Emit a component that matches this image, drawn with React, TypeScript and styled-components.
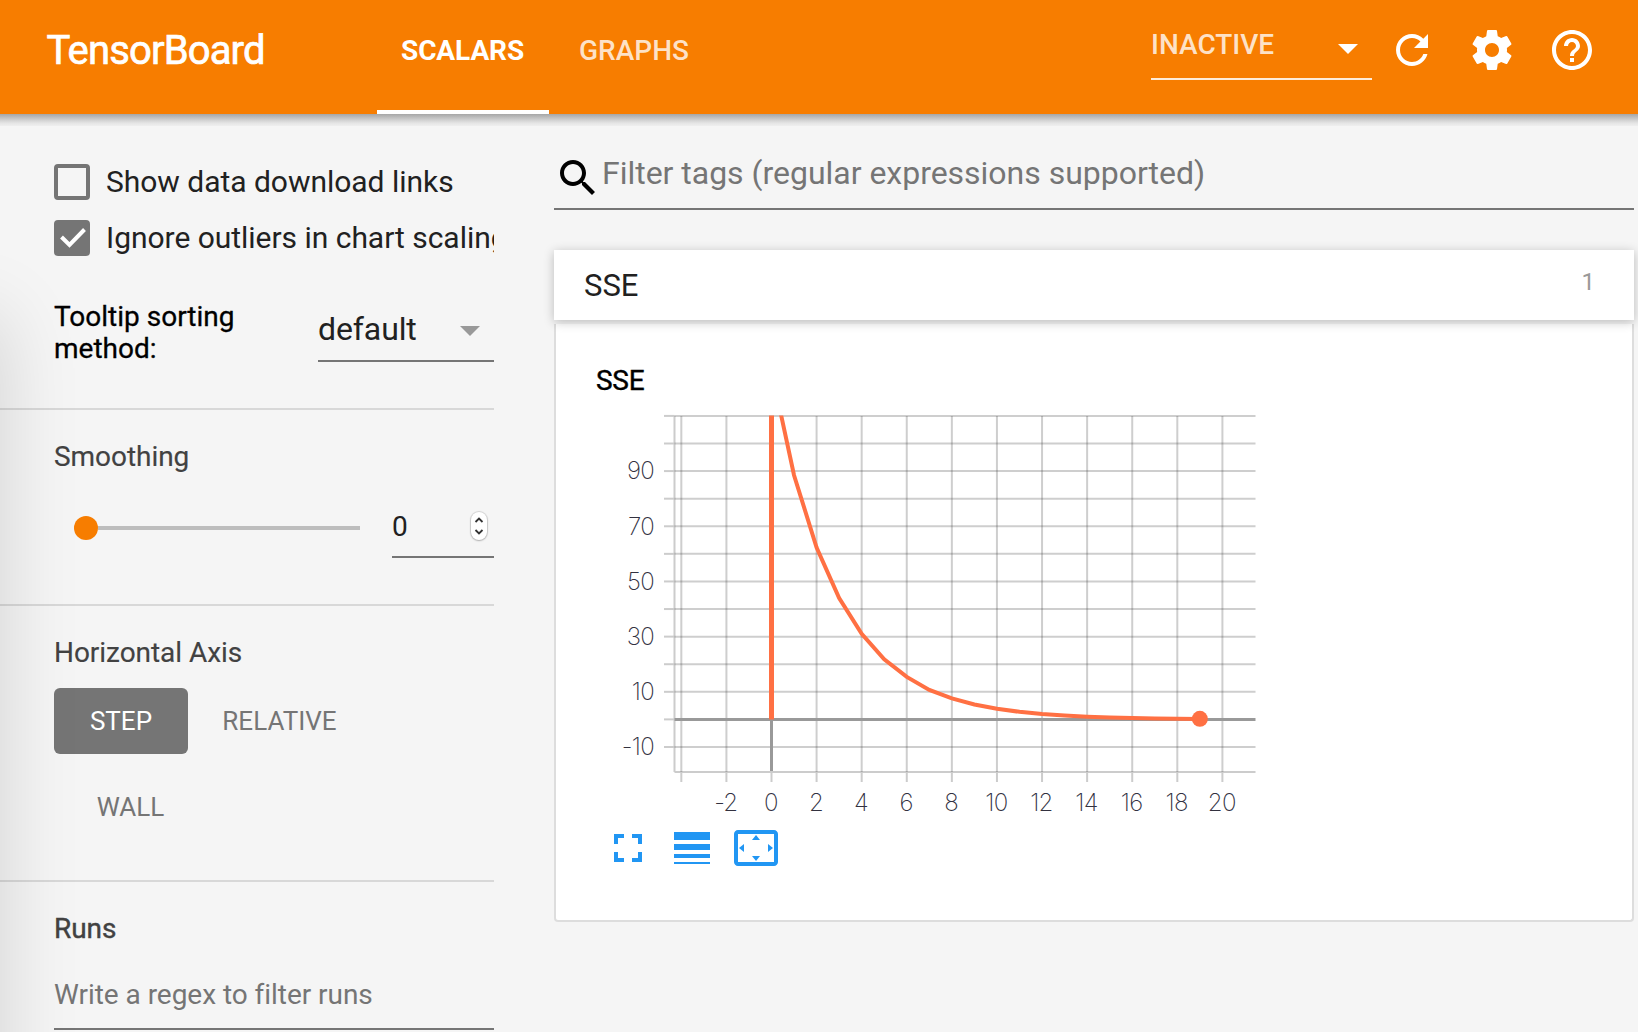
import React from 'react';
import styled, { createGlobalStyle } from 'styled-components';

const GlobalStyle = createGlobalStyle`
  * { box-sizing: border-box; }
  html, body { margin: 0; padding: 0; height: 1032px; overflow: hidden; background: #f5f5f5; }
  body { font-family: Roboto, "Liberation Sans", sans-serif; -webkit-font-smoothing: antialiased; }
`;

const Page = styled.div`
  position: relative;
  width: 1638px;
  height: 1032px;
  overflow: hidden;
  display: flex;
  flex-direction: column;
  background: #f5f5f5;
`;

/* ---------- header ---------- */

const Header = styled.header`
  height: 114px;
  flex: none;
  display: flex;
  align-items: flex-start;
  padding: 0 42px 0 46.5px;
  background: #f77d00;
  color: #fff;
`;

const HeaderShadow = styled.div`
  height: 12px;
  margin-bottom: -12px;
  flex: none;
  background: linear-gradient(#a6a6a6, #c8c8c8 40%, #e4e4e4 75%, #efefef);
`;

const Title = styled.h1`
  margin: 0;
  width: 330.5px;
  font-size: 40px;
  font-weight: 400;
  letter-spacing: -0.85px;
  line-height: 102px;
  -webkit-text-stroke: 0.7px currentColor;
`;

const Tab = styled.div<{ $active?: boolean }>`
  height: 114px;
  padding: 0 24px;
  border-bottom: 4px solid ${(p) => (p.$active ? '#fff' : 'transparent')};
  color: ${(p) => (p.$active ? '#fff' : 'rgba(255,255,255,.78)')};
  font-size: 28px;
  font-weight: ${(p) => (p.$active ? 700 : 500)};
  letter-spacing: ${(p) => (p.$active ? -0.1 : 0)}px;
  line-height: 101px;
  width: ${(p) => (p.$active ? 171.5 : 160)}px;
  white-space: nowrap;
  & + & { padding-left: 30.5px; }
`;

const HeaderTools = styled.div`
  margin-left: auto;
  display: flex;
`;

const StatusSelect = styled.div`
  width: 221px;
  height: 80px;
  padding: 28px 14px 0 0;
  margin-right: 16px;
  display: flex;
  justify-content: space-between;
  border-bottom: 2px solid rgba(255, 255, 255, 0.85);
  color: rgba(255, 255, 255, 0.78);
  font-size: 28px;
  font-weight: 500;
  line-height: 33px;
`;

const Caret = styled.i<{ $color: string; $top: number }>`
  width: 0;
  height: 0;
  margin-top: ${(p) => p.$top}px;
  border: 10px solid transparent;
  border-top-color: ${(p) => p.$color};
  border-bottom: 0;
`;

const HeaderIcon = styled.svg`
  width: 48px;
  height: 48px;
  margin: 26px 0 0 32px;
  fill: currentColor;
  &:first-of-type { margin-left: 0; }
`;

/* ---------- sidebar ---------- */

const Body = styled.div`
  flex: 1;
  min-height: 0;
  display: flex;
`;

const Sidebar = styled.aside`
  width: 494px;
  overflow: hidden;
  flex: none;
`;

const Section = styled.section<{ $height: number; $top: number }>`
  height: ${(p) => p.$height}px;
  padding: ${(p) => p.$top}px 0 0 54px;
  border-bottom: 2px solid #d8d8d8;
  &:last-child { border-bottom: 0; }
`;

const CheckRow = styled.label`
  display: flex;
  align-items: center;
  height: 36px;
  margin-bottom: 20px;
  gap: 16px;
  color: #212121;
  font-size: 30px;
  line-height: 36px;
  letter-spacing: -0.03px;
  white-space: nowrap;
`;

const Box = styled.span<{ $checked?: boolean }>`
  width: 36px;
  height: 36px;
  flex: none;
  border: 4px solid #757575;
  border-radius: 4px;
  background: ${(p) => (p.$checked ? '#757575' : 'transparent')};
  svg { display: block; width: 28px; height: 28px; }
`;

const TooltipRow = styled.div`
  display: flex;
  justify-content: space-between;
  margin-top: 44px;
  color: #000;
  font-size: 28px;
  line-height: 32px;
`;

const TooltipLabel = styled.div`
  width: 200px;
  padding-top: 1px;
  font-weight: 400;
  -webkit-text-stroke: 0.3px currentColor;
`;

const Dropdown = styled.div`
  width: 176px;
  height: 62px;
  padding: 11px 14px 0 0;
  display: flex;
  justify-content: space-between;
  border-bottom: 2px solid #757575;
  color: #212121;
  font-size: 32px;
  line-height: 36px;
  letter-spacing: -0.1px;
`;

const Heading = styled.h3<{ $dark?: boolean }>`
  margin: 0;
  font-size: 28px;
  font-weight: 400;
  line-height: 32px;
  letter-spacing: -0.05px;
  color: #424242;
  -webkit-text-stroke: ${(p) => (p.$dark ? 0.4 : 0.15)}px currentColor;
`;

const SliderRow = styled.div`
  display: flex;
  align-items: flex-start;
  margin-top: 27px;
  padding-left: 20px;
`;

const Slider = styled.div`
  width: 286px;
  height: 56px;
  display: flex;
  align-items: center;
  margin-right: 32px;
`;

const Knob = styled.span`
  width: 24px;
  height: 24px;
  border-radius: 50%;
  background: #f77d00;
`;

const Track = styled.span`
  flex: 1;
  height: 4px;
  background: #bdbdbd;
`;

const NumberField = styled.div`
  width: 102px;
  height: 58px;
  padding: 10px 7px 0 0;
  display: flex;
  justify-content: space-between;
  border-bottom: 2px solid #757575;
  color: #212121;
  font-size: 28px;
  line-height: 33px;
`;

const Stepper = styled.span`
  width: 16px;
  height: 28px;
  margin-top: 2px;
  border-radius: 8px;
  background: #fff;
  box-shadow: 0 0 1px 1px rgba(0, 0, 0, 0.14), 0 1px 2px rgba(0, 0, 0, 0.18);
  svg { display: block; }
`;

const AxisButtons = styled.div`
  display: flex;
  flex-wrap: wrap;
  row-gap: 20px;
  margin-top: 19px;
`;

const AxisButton = styled.button<{ $selected?: boolean; $width: number }>`
  width: ${(p) => p.$width}px;
  height: 66px;
  padding: 0;
  border: 0;
  border-radius: 6px;
  background: ${(p) => (p.$selected ? '#757575' : 'transparent')};
  color: ${(p) => (p.$selected ? '#fff' : '#757575')};
  font: 400 26px/66px Roboto, "Liberation Sans", sans-serif;
`;

const RunsFilter = styled.div`
  height: 62px;
  margin-top: 23px;
  padding-top: 11px;
  border-bottom: 2px solid #757575;
  color: #757575;
  font-size: 28px;
  line-height: 32px;
  letter-spacing: -0.04px;
`;

const WindowShade = styled.div`
  position: absolute;
  left: -100px;
  top: 315px;
  width: 100px;
  height: 1000px;
  box-shadow: 6px 0 76px rgba(0, 0, 0, 0.13);
  pointer-events: none;
`;

/* ---------- main ---------- */

const Main = styled.main`
  width: 1080px;
  margin-left: 60px;
`;

const TagFilter = styled.div`
  height: 96px;
  padding-top: 40px;
  display: flex;
  border-bottom: 2px solid #757575;
  color: #757575;
  font-size: 32px;
  line-height: 38px;
  letter-spacing: -0.02px;
  svg { width: 48px; height: 48px; fill: #000; }
`;

const CategoryHeader = styled.div`
  position: relative;
  display: flex;
  justify-content: space-between;
  height: 70px;
  margin: 40px 0 4px;
  padding: 0 39px 0 30px;
  background: #fff;
  box-shadow: 0 2px 10px rgba(0, 0, 0, 0.24);
  color: #212121;
  font-size: 31px;
  line-height: 72px;
`;

const Count = styled.span`
  color: #999;
  font-size: 24px;
  line-height: 65px;
`;

const Pane = styled.div`
  height: 598px;
  padding: 40px;
  border: 2px solid #ddd;
  border-top: 0;
  border-radius: 0 0 4px 4px;
  background: #fff;
`;

const ChartTitle = styled.h2`
  margin: 0;
  color: #000;
  font-size: 28px;
  font-weight: 400;
  line-height: 33px;
  letter-spacing: -0.3px;
  -webkit-text-stroke: 0.4px currentColor;
`;

const Plot = styled.svg`
  display: block;
  width: 660px;
  height: 422px;
  text {
    font-family: Inter, "Liberation Sans", sans-serif;
    font-weight: 200;
    font-size: 24px;
    letter-spacing: -0.7px;
    fill: #32313f;
  }
`;

const ChartActions = styled.div`
  display: flex;
  gap: 16px;
  margin: 5px 0 0 8px;
  svg { width: 48px; height: 48px; fill: #2196f3; }
`;

/* Plot coordinates start at (596, 397) of the page. */
const X0 = 771.5 - 596;
const Y0 = 719.4 - 397;
const px = (step: number) => X0 + step * 22.545;
const py = (value: number) => Y0 - value * 2.759;

const losses = [126.5, 88.5, 62.3, 44, 31, 21.8, 15.4, 10.7, 7.6, 5.4, 3.85, 2.75, 1.96, 1.4, 0.98, 0.7, 0.5, 0.34, 0.24, 0.18];
const xTicks = [-4, -2, 0, 2, 4, 6, 8, 10, 12, 14, 16, 18, 20];
const yTicks = [110, 100, 90, 80, 70, 60, 50, 40, 30, 20, 10, 0, -10];

function Chart() {
  const left = 78.5;
  const right = 659.5;
  const top = py(110);
  const bottom = 375;
  return (
    <Plot viewBox="0 0 660 422">
      <clipPath id="plotArea">
        <rect x={left} y={top - 0.5} width={right - left} height={bottom - top} />
      </clipPath>
      <g stroke="#ccc" strokeWidth="2">
        <line x1={left} x2={left} y1={top} y2={bottom} />
        <line x1={left} x2={right} y1={bottom} y2={bottom} />
        {xTicks.map((t) => <line key={t} x1={px(t)} x2={px(t)} y1={bottom} y2={385} />)}
        {yTicks.map((t) => <line key={t} x1={68} x2={left} y1={py(t)} y2={py(t)} />)}
      </g>
      <g stroke="#424242" strokeOpacity="0.26" strokeWidth="2">
        {xTicks.filter((t) => t !== 0).map((t) => <line key={t} x1={px(t)} x2={px(t)} y1={top} y2={bottom} />)}
        {yTicks.filter((t) => t !== 0).map((t) => <line key={t} x1={left} x2={right} y1={py(t)} y2={py(t)} />)}
      </g>
      <g stroke="#999" strokeWidth="3">
        <line x1={left} x2={right} y1={Y0} y2={Y0} />
        <line x1={X0} x2={X0} y1={Y0} y2={bottom - 1} />
      </g>
      <g clipPath="url(#plotArea)">
        <line x1={X0} x2={X0} y1={0} y2={Y0} stroke="#ff7043" strokeWidth="5" />
        <polyline
          points={losses.map((v, i) => `${px(i)},${py(v)}`).join(' ')}
          fill="none"
          stroke="#ff7043"
          strokeWidth="4"
        />
      </g>
      <circle cx={px(19)} cy={py(0.2)} r="8" fill="#ff7043" />
      {[90, 70, 50, 30, 10, -10].map((t) => (
        <text key={t} x={58} y={py(t) + 8.3} textAnchor="end">{t}</text>
      ))}
      {xTicks.slice(1).map((t) => (
        <text key={t} x={px(t) - 0.6} y={414} textAnchor="middle">{t}</text>
      ))}
    </Plot>
  );
}

export default function App() {
  return (
    <Page>
      <GlobalStyle />
      <Header>
        <Title>TensorBoard</Title>
        <Tab $active>SCALARS</Tab>
        <Tab>GRAPHS</Tab>
        <HeaderTools>
          <StatusSelect>
            INACTIVE
            <Caret $color="#fff" $top={16} />
          </StatusSelect>
          <HeaderIcon viewBox="0 0 24 24">
            <path d="M17.65 6.35C16.2 4.9 14.21 4 12 4c-4.42 0-7.99 3.58-7.99 8s3.57 8 7.99 8c3.73 0 6.84-2.55 7.73-6h-2.08c-.82 2.33-3.04 4-5.65 4-3.31 0-6-2.69-6-6s2.69-6 6-6c1.66 0 3.14.69 4.22 1.78L13 11h7V4l-2.35 2.35z" />
          </HeaderIcon>
          <HeaderIcon viewBox="0 0 24 24">
            <path d="M19.43 12.98c.04-.32.07-.64.07-.98s-.03-.66-.07-.98l2.11-1.65c.19-.15.24-.42.12-.64l-2-3.46c-.12-.22-.39-.3-.61-.22l-2.49 1c-.52-.4-1.08-.73-1.69-.98l-.38-2.65C14.46 2.18 14.25 2 14 2h-4c-.25 0-.46.18-.49.42l-.38 2.65c-.61.25-1.17.59-1.69.98l-2.49-1c-.23-.09-.49 0-.61.22l-2 3.46c-.13.22-.07.49.12.64l2.11 1.65c-.04.32-.07.65-.07.98s.03.66.07.98l-2.11 1.65c-.19.15-.24.42-.12.64l2 3.46c.12.22.39.3.61.22l2.49-1c.52.4 1.08.73 1.69.98l.38 2.65c.03.24.24.42.49.42h4c.25 0 .46-.18.49-.42l.38-2.65c.61-.25 1.17-.59 1.69-.98l2.49 1c.23.09.49 0 .61-.22l2-3.46c.12-.22.07-.49-.12-.64l-2.11-1.65zM12 15.5c-1.93 0-3.5-1.57-3.5-3.5s1.57-3.5 3.5-3.5 3.5 1.57 3.5 3.5-1.57 3.5-3.5 3.5z" />
          </HeaderIcon>
          <HeaderIcon viewBox="0 0 24 24">
            <path d="M11 18h2v-2h-2v2zm1-16C6.48 2 2 6.48 2 12s4.48 10 10 10 10-4.48 10-10S17.52 2 12 2zm0 18c-4.41 0-8-3.59-8-8s3.59-8 8-8 8 3.59 8 8-3.59 8-8 8zm0-14c-2.21 0-4 1.79-4 4h2c0-1.1.9-2 2-2s2 .9 2 2c0 2-3 1.75-3 5h2c0-2.25 3-2.5 3-5 0-2.21-1.79-4-4-4z" />
          </HeaderIcon>
        </HeaderTools>
      </Header>
      <HeaderShadow />
      <Body>
        <Sidebar>
          <Section $height={296} $top={50}>
            <CheckRow><Box />Show data download links</CheckRow>
            <CheckRow>
              <Box $checked>
                <svg viewBox="0 0 28 28"><path d="M3.5 13l8 8L26.5 5.5" fill="none" stroke="#fff" strokeWidth="4" /></svg>
              </Box>
              Ignore outliers in chart scaling
            </CheckRow>
            <TooltipRow>
              <TooltipLabel>Tooltip sorting method:</TooltipLabel>
              <Dropdown>default<Caret $color="#999" $top={15} /></Dropdown>
            </TooltipRow>
          </Section>
          <Section $height={196} $top={31}>
            <Heading>Smoothing</Heading>
            <SliderRow>
              <Slider><Knob /><Track /></Slider>
              <NumberField>
                0
                <Stepper>
                  <svg width="16" height="28" viewBox="0 0 16 28" fill="none" stroke="#333" strokeWidth="1.8">
                    <path d="M4.5 10L8 6.5l3.5 3.5M4.5 18L8 21.5l3.5-3.5" />
                  </svg>
                </Stepper>
              </NumberField>
            </SliderRow>
          </Section>
          <Section $height={276} $top={31}>
            <Heading>Horizontal Axis</Heading>
            <AxisButtons>
              <AxisButton $selected $width={134}>STEP</AxisButton>
              <AxisButton $width={183}>RELATIVE</AxisButton>
              <AxisButton $width={153}>WALL</AxisButton>
            </AxisButtons>
          </Section>
          <Section $height={150} $top={31}>
            <Heading $dark>Runs</Heading>
            <RunsFilter>Write a regex to filter runs</RunsFilter>
          </Section>
        </Sidebar>
        <Main>
          <TagFilter>
            <svg viewBox="0 0 24 24">
              <path d="M15.5 14h-.79l-.28-.27C15.41 12.59 16 11.11 16 9.5 16 5.91 13.09 3 9.5 3S3 5.91 3 9.5 5.91 16 9.5 16c1.61 0 3.09-.59 4.23-1.57l.27.28v.79l5 4.99L20.49 19l-4.99-5zm-6 0C7.01 14 5 11.99 5 9.5S7.01 5 9.5 5 14 7.01 14 9.5 11.99 14 9.5 14z" />
            </svg>
            Filter tags (regular expressions supported)
          </TagFilter>
          <CategoryHeader>SSE<Count>1</Count></CategoryHeader>
          <Pane>
            <ChartTitle>SSE</ChartTitle>
            <Chart />
            <ChartActions>
              <svg viewBox="0 0 24 24"><path d="M7 14H5v5h5v-2H7v-3zm-2-4h2V7h3V5H5v5zm12 7h-3v2h5v-5h-2v3zM14 5v2h3v3h2V5h-5z" /></svg>
              <svg viewBox="0 0 24 24"><path d="M3 17h18v-2H3v2zm0 3h18v-1H3v1zm0-7h18v-3H3v3zm0-9v4h18V4H3z" /></svg>
              <svg viewBox="0 0 24 24"><path d="M12.01 5.5L10 8h4l-1.99-2.5zM18 10v4l2.5-1.99L18 10zM6 10l-2.5 2.01L6 14v-4zm8 6h-4l2.01 2.5L14 16zm7-13H3c-1.1 0-2 .9-2 2v14c0 1.1.9 2 2 2h18c1.1 0 2-.9 2-2V5c0-1.1-.9-2-2-2zm0 16.01H3V4.99h18v14.02z" /></svg>
            </ChartActions>
          </Pane>
        </Main>
      </Body>
      <WindowShade />
    </Page>
  );
}
